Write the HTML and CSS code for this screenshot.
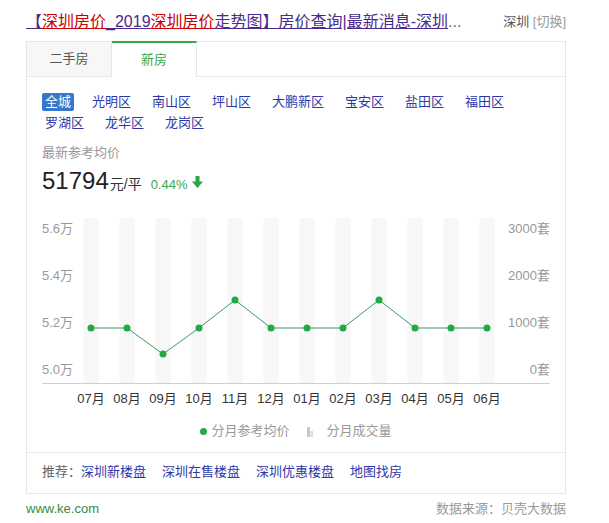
FILE: index.html
```html
<!DOCTYPE html>
<html lang="zh-CN">
<head>
<meta charset="utf-8">
<title>深圳房价</title>
<link rel="stylesheet" href="styles.css">
</head>
<body>
<div class="wrap">
  <div class="head">
    <div class="title"><a href="#">【<em>深圳房价</em>_2019<em>深圳房价</em>走势图】房价查询|最新消息-深圳</a><span class="ell">...</span></div>
    <div class="city"><span class="cur">深圳</span> <span class="switch">[切换]</span></div>
  </div>
  <div class="card">
    <div class="tabs">
      <div class="tab">二手房</div>
      <div class="tab active">新房</div>
      <div class="tab-fill"></div>
    </div>
    <div class="body">
      <div class="districts">
        <a class="d on" href="#">全城</a>
        <a class="d" href="#">光明区</a>
        <a class="d" href="#">南山区</a>
        <a class="d" href="#">坪山区</a>
        <a class="d" href="#">大鹏新区</a>
        <a class="d" href="#">宝安区</a>
        <a class="d" href="#">盐田区</a>
        <a class="d" href="#">福田区</a>
        <a class="d" href="#">罗湖区</a>
        <a class="d" href="#">龙华区</a>
        <a class="d" href="#">龙岗区</a>
      </div>
      <div class="label">最新参考均价</div>
      <div class="price">
        <span class="num">51794</span><span class="unit">元/平</span>
        <span class="chg">0.44%</span>
        <svg class="arrow" width="11" height="12" viewBox="0 0 11 12"><path d="M3.5 0h4v5.5h3.5l-5.5 6.5-5.5-6.5h3.5z" fill="#27a844"/></svg>
      </div>
      <svg class="chart" width="508" height="200" viewBox="0 0 508 200">
        <g class="stripes">
          <rect x="41.5" y="8" width="15" height="165"/>
          <rect x="77.5" y="8" width="15" height="165"/>
          <rect x="113.5" y="8" width="15" height="165"/>
          <rect x="149.5" y="8" width="15" height="165"/>
          <rect x="185.5" y="8" width="15" height="165"/>
          <rect x="221.5" y="8" width="15" height="165"/>
          <rect x="257.5" y="8" width="15" height="165"/>
          <rect x="293.5" y="8" width="15" height="165"/>
          <rect x="329.5" y="8" width="15" height="165"/>
          <rect x="365.5" y="8" width="15" height="165"/>
          <rect x="401.5" y="8" width="15" height="165"/>
          <rect x="437.5" y="8" width="15" height="165"/>
        </g>
        <line class="axis" x1="0" y1="173.5" x2="508" y2="173.5"/>
        <g class="ylab">
          <text x="0" y="18">5.6万</text>
          <text x="0" y="65">5.4万</text>
          <text x="0" y="112">5.2万</text>
          <text x="0" y="159">5.0万</text>
        </g>
        <g class="ylab r">
          <text x="508" y="18">3000套</text>
          <text x="508" y="65">2000套</text>
          <text x="508" y="112">1000套</text>
          <text x="508" y="159">0套</text>
        </g>
        <polyline class="line" points="49,118 85,118 121,144 157,118 193,90 229,118 265,118 301,118 337,90 373,118 409,118 445,118"/>
        <g class="dots">
          <circle cx="49" cy="118" r="3.5"/>
          <circle cx="85" cy="118" r="3.5"/>
          <circle cx="121" cy="144" r="3.5"/>
          <circle cx="157" cy="118" r="3.5"/>
          <circle cx="193" cy="90" r="3.5"/>
          <circle cx="229" cy="118" r="3.5"/>
          <circle cx="265" cy="118" r="3.5"/>
          <circle cx="301" cy="118" r="3.5"/>
          <circle cx="337" cy="90" r="3.5"/>
          <circle cx="373" cy="118" r="3.5"/>
          <circle cx="409" cy="118" r="3.5"/>
          <circle cx="445" cy="118" r="3.5"/>
        </g>
        <g class="xlab">
          <text x="49" y="188">07月</text>
          <text x="85" y="188">08月</text>
          <text x="121" y="188">09月</text>
          <text x="157" y="188">10月</text>
          <text x="193" y="188">11月</text>
          <text x="229" y="188">12月</text>
          <text x="265" y="188">01月</text>
          <text x="301" y="188">02月</text>
          <text x="337" y="188">03月</text>
          <text x="373" y="188">04月</text>
          <text x="409" y="188">05月</text>
          <text x="445" y="188">06月</text>
        </g>
      </svg>
      <div class="legend">
        <span class="lg"><span class="dot"></span>分月参考均价</span>
        <span class="lg"><svg class="bars" width="6" height="10" viewBox="0 0 6 10"><rect x="0" y="0" width="3" height="10" fill="#c8c8c8"/><rect x="3.5" y="4" width="2.5" height="6" fill="#dcdcdc"/></svg>分月成交量</span>
      </div>
    </div>
    <div class="rec">推荐：<a href="#">深圳新楼盘</a><a href="#">深圳在售楼盘</a><a href="#">深圳优惠楼盘</a><a href="#">地图找房</a></div>
  </div>
  <div class="foot"><span class="url">www.ke.com</span><span class="src">数据来源：贝壳大数据</span></div>
</div>
</body>
</html>
```

FILE: styles.css
```css
* { box-sizing: border-box; }
html, body { margin: 0; padding: 0; background: #fff; }
body {
  font-family: "Liberation Sans", "Noto Sans CJK SC", sans-serif;
  font-size: 13px;
  color: #333;
}
a { text-decoration: none; }
.wrap {
  width: 540px;
  margin-left: 26px;
}
.head {
  display: flex;
  justify-content: space-between;
  align-items: center;
  padding-top: 12px;
  padding-bottom: 9px;
  height: 41px;
}
.title {
  font-size: 16px;
  line-height: 20px;
  white-space: nowrap;
}
.title a {
  color: #4a2b8c;
  text-decoration: underline;
}
.title em {
  font-style: normal;
  color: #c00;
  text-decoration: underline;
}
.title .ell { color: #666; }
.city {
  font-size: 13px;
  line-height: 20px;
}
.city .cur { color: #555; }
.city .switch { color: #999; }

.card {
  border: 1px solid #e6e6e6;
  border-top: none;
}
.tabs {
  display: flex;
  height: 36px;
}
.tab {
  width: 85px;
  border-top: 1px solid #e6e6e6;
  border-right: 1px solid #e6e6e6;
  border-bottom: 1px solid #e6e6e6;
  background: #f7f7f7;
  color: #555;
  text-align: center;
  line-height: 34px;
  font-size: 13px;
}
.tab.active {
  background: #fff;
  color: #3aa64d;
  border-top: 2px solid #38a84e;
  border-bottom: none;
}
.tab-fill {
  flex: 1;
  border-top: 1px solid #e6e6e6;
  border-bottom: 1px solid #e6e6e6;
}
.body {
  padding: 16px 15px 11px;
}
.districts {
  display: flex;
  flex-wrap: wrap;
  row-gap: 3px;
}
.d {
  height: 18px;
  line-height: 18px;
  padding: 0 3px;
  margin-right: 15px;
  color: #2c37a8;
  font-size: 13px;
}
.d.on {
  background: #3478cc;
  color: #fff;
  border-radius: 2px;
}
.label {
  margin-top: 11px;
  line-height: 20px;
  color: #999;
  font-size: 13px;
}
.price {
  margin-top: 4px;
  height: 28px;
  display: flex;
  align-items: baseline;
}
.price .num {
  font-size: 24px;
  line-height: 28px;
  color: #222;
}
.price .unit {
  font-size: 14px;
  color: #333;
  margin-left: 1px;
}
.price .chg {
  font-size: 13px;
  color: #3aa64d;
  margin-left: 9px;
}
.price .arrow {
  margin-left: 4px;
  align-self: center;
  margin-top: 2px;
}
.chart {
  display: block;
  margin-top: 15px;
  overflow: visible;
}
.chart text {
  font-family: "Liberation Sans", "Noto Sans CJK SC", sans-serif;
  font-size: 13px;
  dominant-baseline: central;
}
.stripes rect { fill: #f7f7f7; }
.axis { stroke: #cfcfcf; stroke-width: 1; }
.ylab text { fill: #999; }
.ylab.r text { text-anchor: end; }
.xlab text { fill: #333; text-anchor: middle; }
.line { fill: none; stroke: #3b9c5a; stroke-width: 1; }
.dots circle { fill: #22a845; }
.legend {
  margin-top: 11px;
  display: flex;
  justify-content: center;
  gap: 17px;
  line-height: 20px;
  color: #999;
  font-size: 13px;
}
.lg {
  display: flex;
  align-items: center;
}
.dot {
  width: 7px;
  height: 7px;
  border-radius: 50%;
  background: #22a845;
  margin-right: 4px;
}
.bars {
  margin-right: 14px;
  margin-top: 2px;
}
.rec {
  border-top: 1px solid #e6e6e6;
  padding: 9px 15px 11px;
  line-height: 20px;
  color: #666;
}
.rec a {
  color: #2c37a8;
  margin-right: 16px;
}
.foot {
  display: flex;
  justify-content: space-between;
  margin-top: 5px;
  line-height: 20px;
  font-size: 13px;
}
.foot .url { color: #3d8a3d; }
.foot .src { color: #999; }
```
